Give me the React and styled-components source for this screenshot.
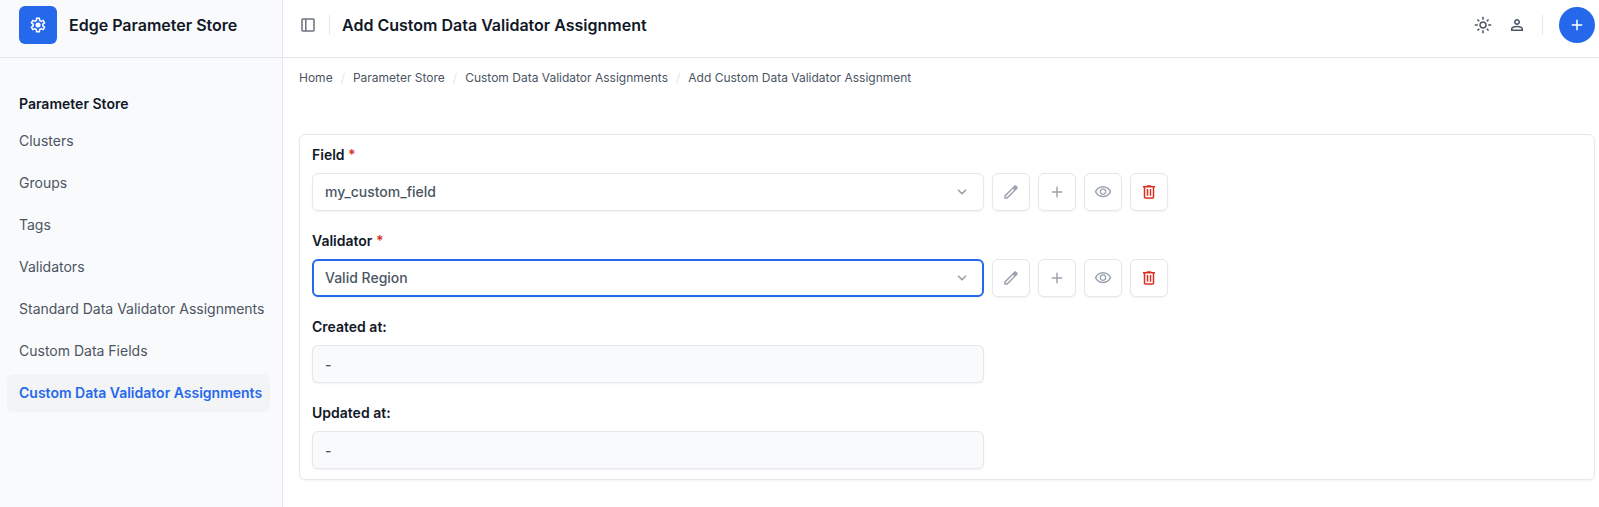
import React from "react";
import styled, { createGlobalStyle, css } from "styled-components";

const color = {
  primary: "#2668eb",
  danger: "#d93025",
  strong: "#111827",
  text: "#4b5563",
  icon: "#6b7280",
  muted: "#9ca3af",
  border: "#e5e7eb",
  subtle: "#f9fafb",
  active: "#f3f4f6",
};

const GlobalStyle = createGlobalStyle`
  *, *::before, *::after { box-sizing: border-box; }
  body {
    margin: 0;
    background: #ffffff;
    color: ${color.text};
    font-family: Inter, "Liberation Sans", sans-serif;
    font-size: 14px;
    line-height: 20px;
  }
  button, input, select { font: inherit; color: inherit; }
`;

const paths = {
  settings:
    "m370-80-16-128q-13-5-24.500-12T307-235l-119 50L78-375l103-78q-1-7-1-13.500v-27q0-6.500 1-13.500L78-585l110-190 119 50q11-8 23-15t24-12l16-128h220l16 128q13 5 24.500 12t22.500 15l119-50 110 190-103 78q1 7 1 13.500v27q0 6.500-2 13.500l103 78-110 190-118-50q-11 8-23 15t-24 12L590-80H370Zm70-80h79l14-106q31-8 57.500-23.500T639-327l99 41 39-68-86-65q5-14 7-29.500t2-31.500q0-16-2-31.500t-7-29.500l86-65-39-68-99 42q-22-23-48.500-38.500T533-694l-13-106h-79l-14 106q-31 8-57.500 23.500T321-633l-99-41-39 68 86 64q-5 15-7 30t-2 32q0 16 2 31t7 30l-86 65 39 68 99-42q22 23 48.500 38.500T427-266l13 106Zm42-180q58 0 99-41t41-99q0-58-41-99t-99-41q-59 0-99.500 41T342-480q0 58 40.500 99t99.500 41Z",
  panel:
    "M200-120q-33 0-56.500-23.500T120-200v-560q0-33 23.500-56.500T200-840h560q33 0 56.500 23.500T840-760v560q0 33-23.500 56.500T760-120H200Zm120-80v-560H200v560h120Zm80 0h360v-560H400v560Z",
  sun:
    "M480-360q50 0 85-35t35-85q0-50-35-85t-85-35q-50 0-85 35t-35 85q0 50 35 85t85 35Zm0 80q-83 0-141.500-58.500T280-480q0-83 58.500-141.500T480-680q83 0 141.500 58.500T680-480q0 83-58.500 141.500T480-280ZM200-440H40v-80h160v80Zm720 0H760v-80h160v80ZM440-760v-160h80v160h-80Zm0 720v-160h80v160h-80ZM256-650l-101-97 57-59 96 100-52 56Zm492 496-97-101 53-55 101 97-57 59Zm-98-550 97-101 59 57-100 96-56-52ZM154-212l101-97 55 53-97 101-59-57Z",
  person:
    "M480-480q-66 0-113-47t-47-113q0-66 47-113t113-47q66 0 113 47t47 113q0 66-47 113t-113 47ZM160-160v-112q0-34 17.500-62.500T224-378q62-31 126-46.500T480-440q66 0 130 15.500T736-378q29 15 46.500 43.500T800-272v112H160Zm80-80h480v-32q0-11-5.500-20T700-306q-54-27-109-40.500T480-360q-56 0-111 13.500T260-306q-9 5-14.500 14t-5.500 20v32Zm240-320q33 0 56.500-23.500T560-640q0-33-23.500-56.500T480-720q-33 0-56.500 23.500T400-640q0 33 23.500 56.500T480-560Z",
  add: "M440-440H200v-80h240v-240h80v240h240v80H520v240h-80v-240Z",
  edit:
    "M200-200h57l391-391-57-57-391 391v57Zm-80 80v-170l528-527q12-11 26.500-17t30.500-6q16 0 31 6t26 18l55 56q12 11 17.500 26t5.500 30q0 16-5.500 30.500T817-647L290-120H120Z",
  view:
    "M480-320q75 0 127.500-52.500T660-500q0-75-52.500-127.500T480-680q-75 0-127.500 52.500T300-500q0 75 52.500 127.500T480-320Zm0-72q-45 0-76.500-31.500T372-500q0-45 31.500-76.500T480-608q45 0 76.500 31.500T588-500q0 45-31.500 76.500T480-392Zm0 192q-146 0-266-81.500T40-500q54-137 174-218.500T480-800q146 0 266 81.500T920-500q-54 137-174 218.500T480-200Zm0-80q113 0 207.500-59.500T832-500q-50-101-144.500-160.500T480-720q-113 0-207.500 59.500T128-500q50 101 144.500 160.500T480-280Z",
  remove:
    "M280-120q-33 0-56.500-23.500T200-200v-520h-40v-80h200v-40h240v40h200v80h-40v520q0 33-23.500 56.500T680-120H280Zm400-600H280v520h400v-520ZM360-280h80v-360h-80v360Zm160 0h80v-360h-80v360Z",
};

const IconSvg = styled.svg`
  display: block;
  flex: none;
  width: 18px;
  height: 18px;
  fill: currentColor;
`;

const Icon = ({ name }) => (
  <IconSvg viewBox="0 -960 960 960" aria-hidden="true">
    <path d={paths[name]} />
  </IconSvg>
);

const Page = styled.div`
  display: flex;
  min-height: 100vh;
`;

const Sidebar = styled.aside`
  flex: 0 0 283px;
  background: ${color.subtle};
  border-right: 1px solid ${color.border};
`;

const bar = css`
  display: flex;
  align-items: center;
  height: 58px;
  padding-bottom: 7px;
  border-bottom: 1px solid ${color.border};
`;

const Brand = styled.a`
  ${bar}
  gap: 12px;
  padding-left: 19px;
  color: ${color.strong};
  font-size: 16px;
  font-weight: 600;
  text-decoration: none;
`;

const Logo = styled.span`
  display: grid;
  place-items: center;
  width: 38px;
  height: 38px;
  border-radius: 6px;
  background: ${color.primary};
  color: #ffffff;
`;

const Nav = styled.nav`
  padding: 36px 12px 0 7px;
`;

const NavTitle = styled.h2`
  margin: 0 0 8px;
  padding-left: 12px;
  color: ${color.strong};
  font-size: 14px;
  font-weight: 600;
`;

const NavList = styled.ul`
  display: flex;
  flex-direction: column;
  gap: 4px;
  margin: 0;
  padding: 0;
  list-style: none;
`;

const NavLink = styled.a`
  display: block;
  padding: 9px 0 9px 12px;
  border-radius: 6px;
  background: ${(p) => (p.$active ? color.active : "transparent")};
  color: ${(p) => (p.$active ? color.primary : color.text)};
  font-weight: ${(p) => (p.$active ? 600 : 400)};
  text-decoration: none;
  white-space: nowrap;
`;

const Main = styled.main`
  flex: 1;
  min-width: 0;
`;

const Header = styled.header`
  ${bar}
  padding-left: 16px;
  padding-right: 4px;
`;

const PlainButton = styled.button`
  display: block;
  padding: 0;
  border: 0;
  background: none;
  color: ${(p) => (p.$dark ? color.text : color.icon)};
  cursor: pointer;
`;

const Separator = styled.span`
  width: 1px;
  height: 20px;
  margin: ${(p) => (p.$wide ? "0 16px 0 0" : "0 12px")};
  background: ${color.border};
`;

const Title = styled.h1`
  margin: 0;
  color: ${color.strong};
  font-size: 16px;
  font-weight: 600;
`;

const Tools = styled.div`
  display: flex;
  align-items: center;
  gap: 16px;
  margin: 0 16px 0 auto;
`;

const RoundButton = styled.button`
  display: grid;
  place-items: center;
  width: 36px;
  height: 36px;
  padding: 0;
  border: 0;
  border-radius: 50%;
  background: ${color.primary};
  color: #ffffff;
  cursor: pointer;
`;

const Breadcrumbs = styled.ol`
  display: flex;
  margin: 0;
  padding: 10px 16px 0;
  list-style: none;
  font-size: 12px;
`;

const Crumb = styled.li`
  &:not(:last-child)::after {
    content: "/";
    margin: 0 8px;
    color: ${color.border};
  }
`;

const CrumbLink = styled.a`
  color: inherit;
  text-decoration: none;
`;

const Card = styled.form`
  display: flex;
  flex-direction: column;
  gap: 20px;
  margin: 46px 4px 27px 16px;
  padding: 10px 12px;
  border: 1px solid ${color.border};
  border-radius: 6px;
  box-shadow: 0 1px 2px rgba(0, 0, 0, 0.05);
`;

const FieldRow = styled.div`
  display: flex;
  flex-direction: column;
  gap: 8px;
`;

const Label = styled.label`
  align-self: flex-start;
  color: ${color.strong};
  font-weight: 600;
`;

const Required = styled.span`
  color: ${color.danger};
`;

const Controls = styled.div`
  display: flex;
  gap: 8px;
`;

const box = css`
  height: 38px;
  border: 1px solid ${color.border};
  border-radius: 6px;
  box-shadow: 0 1px 2px rgba(0, 0, 0, 0.05);
`;

const SelectWrap = styled.div`
  display: grid;
  flex: 0 1 672px;
  align-items: center;
  min-width: 0;
`;

const Select = styled.select`
  ${box}
  grid-area: 1 / 1;
  width: 100%;
  padding: 0 40px 0 12px;
  appearance: none;
  background: #ffffff;
  font-weight: 500;
  outline: ${(p) => (p.$focused ? `2px solid ${color.primary}` : "none")};
  outline-offset: -2px;
`;

const Chevron = styled.svg`
  grid-area: 1 / 1;
  justify-self: end;
  width: 14px;
  height: 14px;
  margin-right: 15px;
  fill: none;
  stroke: ${color.muted};
  stroke-width: 3;
  stroke-linecap: round;
  stroke-linejoin: round;
  pointer-events: none;
`;

const IconButton = styled.button`
  ${box}
  display: grid;
  place-items: center;
  flex: none;
  width: 38px;
  padding: 0;
  background: #ffffff;
  color: ${(p) => (p.$danger ? color.danger : color.muted)};
  cursor: pointer;
`;

const ReadOnly = styled.input`
  ${box}
  width: 100%;
  max-width: 672px;
  padding: 0 12px;
  background: ${color.subtle};
  font-weight: 500;
`;

const navItems = [
  "Clusters",
  "Groups",
  "Tags",
  "Validators",
  "Standard Data Validator Assignments",
  "Custom Data Fields",
  "Custom Data Validator Assignments",
];

const crumbs = ["Home", "Parameter Store", "Custom Data Validator Assignments"];

const actions = [
  ["edit", "Change"],
  ["add", "Add"],
  ["view", "View"],
  ["remove", "Delete"],
];

const RelatedField = ({ id, label, value, focused }) => (
  <FieldRow>
    <Label htmlFor={id}>
      {label} <Required>*</Required>
    </Label>
    <Controls>
      <SelectWrap>
        <Select id={id} defaultValue={value} $focused={focused}>
          <option>{value}</option>
        </Select>
        <Chevron viewBox="0 0 24 24" aria-hidden="true">
          <path d="m6 9 6 6 6-6" />
        </Chevron>
      </SelectWrap>
      {actions.map(([name, verb]) => (
        <IconButton
          key={name}
          type="button"
          aria-label={`${verb} ${label}`}
          $danger={name === "remove"}
        >
          <Icon name={name} />
        </IconButton>
      ))}
    </Controls>
  </FieldRow>
);

const StaticField = ({ id, label }) => (
  <FieldRow>
    <Label htmlFor={id}>{label}</Label>
    <ReadOnly id={id} value="-" readOnly />
  </FieldRow>
);

export default function App() {
  return (
    <>
      <GlobalStyle />
      <Page>
        <Sidebar>
          <Brand href="#">
            <Logo>
              <Icon name="settings" />
            </Logo>
            Edge Parameter Store
          </Brand>
          <Nav>
            <NavTitle>Parameter Store</NavTitle>
            <NavList>
              {navItems.map((item, i) => (
                <li key={item}>
                  <NavLink href="#" $active={i === navItems.length - 1}>
                    {item}
                  </NavLink>
                </li>
              ))}
            </NavList>
          </Nav>
        </Sidebar>
        <Main>
          <Header>
            <PlainButton type="button" aria-label="Toggle sidebar">
              <Icon name="panel" />
            </PlainButton>
            <Separator />
            <Title>Add Custom Data Validator Assignment</Title>
            <Tools>
              <PlainButton type="button" aria-label="Theme" $dark>
                <Icon name="sun" />
              </PlainButton>
              <PlainButton type="button" aria-label="Account" $dark>
                <Icon name="person" />
              </PlainButton>
            </Tools>
            <Separator $wide />
            <RoundButton type="button" aria-label="Add">
              <Icon name="add" />
            </RoundButton>
          </Header>
          <Breadcrumbs>
            {crumbs.map((c) => (
              <Crumb key={c}>
                <CrumbLink href="#">{c}</CrumbLink>
              </Crumb>
            ))}
            <Crumb>Add Custom Data Validator Assignment</Crumb>
          </Breadcrumbs>
          <Card>
            <RelatedField id="field" label="Field" value="my_custom_field" />
            <RelatedField id="validator" label="Validator" value="Valid Region" focused />
            <StaticField id="created" label="Created at:" />
            <StaticField id="updated" label="Updated at:" />
          </Card>
        </Main>
      </Page>
    </>
  );
}
